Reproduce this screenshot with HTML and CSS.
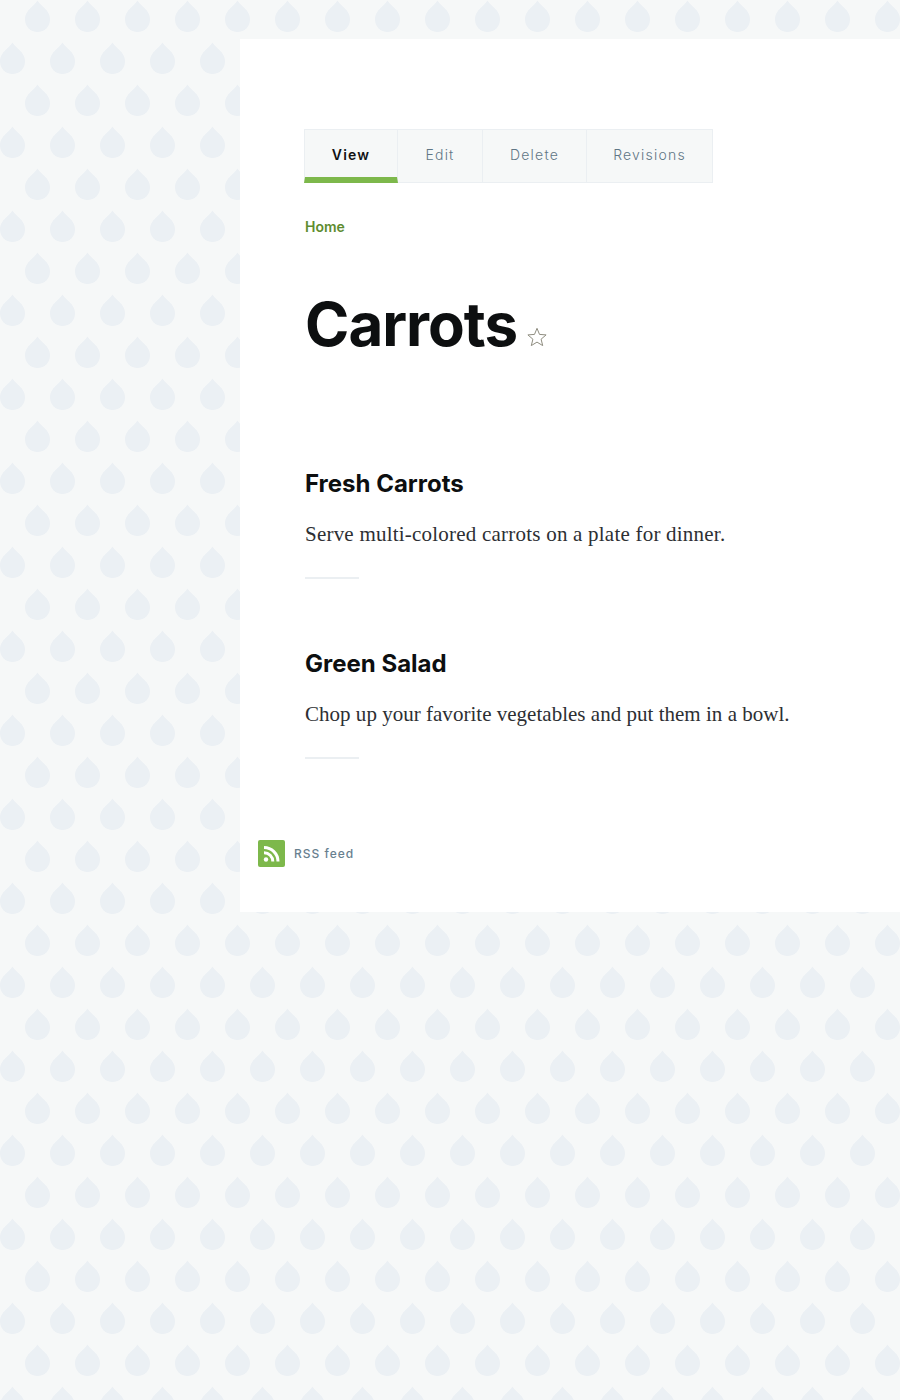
FILE: index.html
```html
<!DOCTYPE html>
<html lang="en">
<head>
<meta charset="utf-8">
<title>Carrots</title>
<link rel="stylesheet" href="styles.css">
</head>
<body>
<main class="page">
  <div class="content">
    <ul class="tabs">
      <li class="tab active"><a href="#">View</a></li>
      <li class="tab edit"><a href="#">Edit</a></li>
      <li class="tab delete"><a href="#">Delete</a></li>
      <li class="tab revisions"><a href="#">Revisions</a></li>
    </ul>
    <nav class="crumbs"><a href="#">Home</a></nav>
    <div class="title-row">
      <h1>Carrots</h1>
      <svg class="star" viewBox="0 0 20 20" width="20" height="20" aria-hidden="true">
        <path d="M10 1.3l2.5 6.1 6.6.5-5 4.3 1.6 6.4L10 15.1l-5.7 3.5 1.6-6.4-5-4.3 6.6-.5z" fill="none" stroke="#8f8d80" stroke-width="1" stroke-linejoin="round"/>
      </svg>
    </div>
    <article class="teaser">
      <h2>Fresh Carrots</h2>
      <p>Serve multi-colored carrots on a plate for dinner.</p>
    </article>
    <article class="teaser">
      <h2>Green Salad</h2>
      <p>Chop up your favorite vegetables and put them in a bowl.</p>
    </article>
  </div>
  <a class="feed" href="#">
    <svg class="rss" viewBox="0 0 27 27" width="27" height="27" aria-hidden="true">
      <rect width="27" height="27" rx="2" fill="#7db84b"/>
      <circle cx="8" cy="19.5" r="2.2" fill="#fff"/>
      <path d="M6 11.2a10.3 10.3 0 0 1 10.3 10.3h-3A7.3 7.3 0 0 0 6 14.2z" fill="#fff"/>
      <path d="M6 6a15.5 15.5 0 0 1 15.5 15.5h-3A12.5 12.5 0 0 0 6 9z" fill="#fff"/>
    </svg>
    <span>RSS feed</span>
  </a>
</main>
</body>
</html>
```

FILE: styles.css
```css
html, body {
  margin: 0;
  padding: 0;
}
body {
  min-height: 1400px;
  box-sizing: border-box;
  padding-top: 39px;
  background-color: #f6f8f8;
  background-image: url("data:image/svg+xml,%3Csvg xmlns='http://www.w3.org/2000/svg' width='50' height='84'%3E%3Cdefs%3E%3Cpath id='d' d='M12.5 0.5C13.5 2.5 16 4.5 19.5 8C22.5 11 25 14.5 25 19.5C25 26.5 19.5 32 12.5 32C5.5 32 0 26.5 0 19.5C0 14.5 2.5 11 5.5 8C9 4.5 11.5 2.5 12.5 0.5Z' fill='%23ebf0f4'/%3E%3C/defs%3E%3Cuse href='%23d' x='25' y='0'/%3E%3Cuse href='%23d' x='0' y='42'/%3E%3C/svg%3E");
  font-family: "Inter", "Liberation Sans", sans-serif;
}
.page {
  margin-left: 240px;
  height: 873px;
  background: #fff;
  box-sizing: border-box;
  padding-top: 90px;
}
.content {
  padding-left: 64px;
}
.tabs {
  display: inline-flex;
  margin: 0;
  padding: 0;
  list-style: none;
  height: 54px;
  vertical-align: top;
}
.tab {
  box-sizing: border-box;
  height: 54px;
  padding-bottom: 3px;
  background: #f6f8f8;
  border: 1px solid #ebeff2;
  border-left: 0;
  display: flex;
  align-items: center;
  justify-content: center;
  font-size: 14px;
  font-weight: 300;
  letter-spacing: 1.2px;
}
.tab a {
  color: #5f7685;
  text-decoration: none;
}
.tab.active {
  width: 94px;
  border-left: 1px solid #ebeff2;
  border-bottom: 6px solid #7db84b;
  padding: 2px 0 0;
  font-weight: 600;
}
.tab.active a {
  color: #111214;
}
.tab.edit { width: 85px; }
.tab.delete { width: 104px; }
.tab.revisions { width: 126px; }
.crumbs {
  margin: 35px 0 0 1px;
  height: 17px;
  line-height: 17px;
  font-size: 14px;
  font-weight: 600;
}
.crumbs a {
  color: #5e8c2f;
  text-decoration: none;
}
.title-row {
  display: flex;
  align-items: flex-end;
  margin: 52px 0 0 1px;
  height: 74px;
}
h1 {
  margin: 0;
  font-size: 60px;
  line-height: 74px;
  font-weight: 700;
  letter-spacing: -1px;
  color: #0d0f10;
}
.star {
  margin: 0 0 14px 10px;
}
.teaser {
  margin-left: 1px;
}
.title-row + .teaser {
  margin-top: 107px;
}
.teaser + .teaser {
  margin-top: 69px;
}
h2 {
  margin: 0;
  font-size: 24px;
  line-height: 32px;
  font-weight: 700;
  color: #0d0f10;
}
.teaser p {
  margin: 19px 0 0;
  font-family: "Liberation Serif", serif;
  font-size: 21px;
  line-height: 30px;
  letter-spacing: 0.02px;
  color: #2d2f33;
}
.title-row + .teaser p {
  letter-spacing: 0.22px;
}
.teaser p::after {
  content: "";
  display: block;
  width: 54px;
  height: 2px;
  margin-top: 28px;
  background: #ebeff2;
}
.feed {
  display: flex;
  align-items: center;
  gap: 9px;
  margin: 81px 0 0 18px;
  text-decoration: none;
  color: #68808f;
  font-size: 12px;
  font-weight: 500;
  letter-spacing: 1px;
}
```
